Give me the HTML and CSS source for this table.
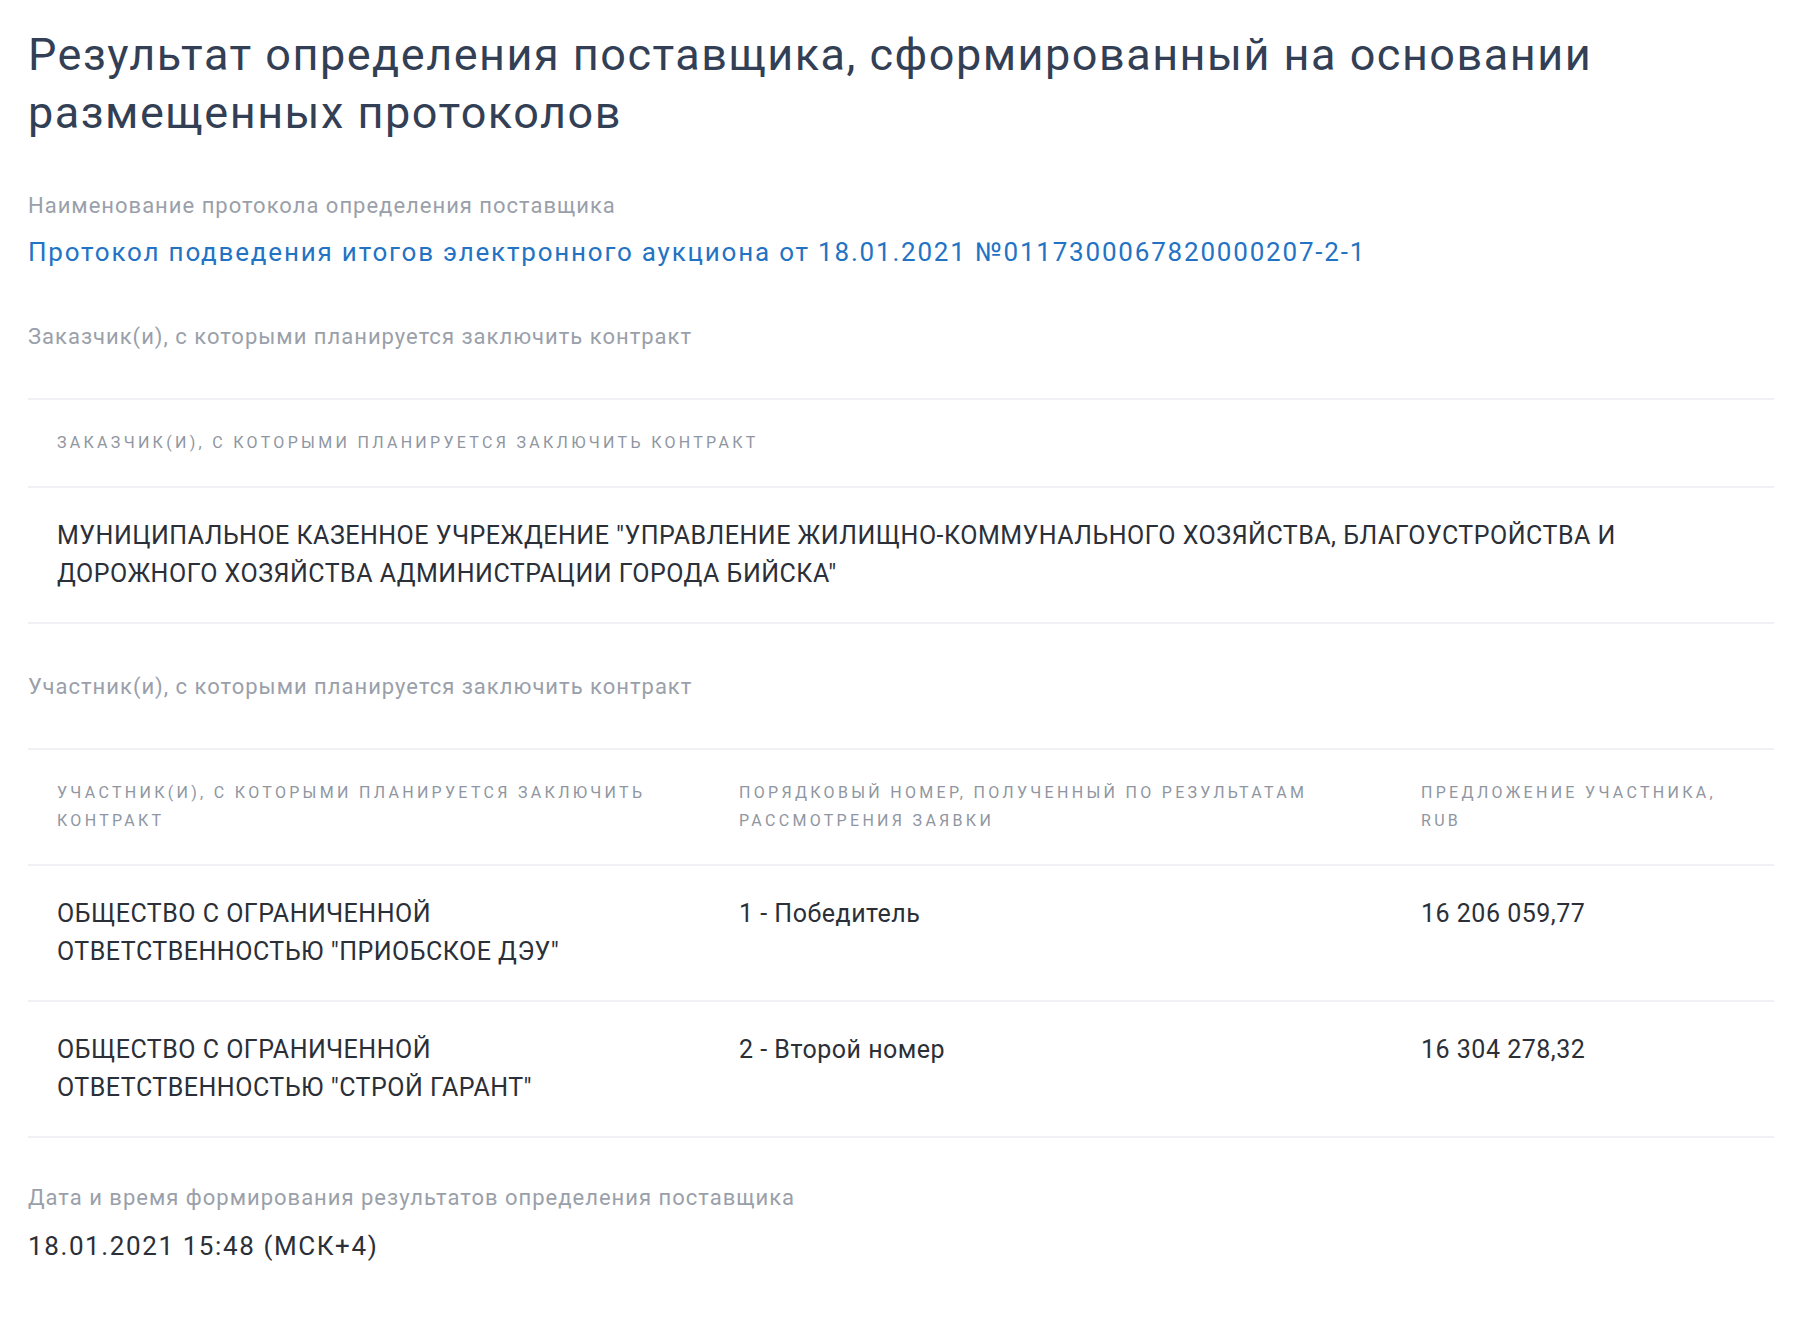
FILE: index.html
```html
<!DOCTYPE html>
<html lang="ru">
<head>
<meta charset="utf-8">
<title>Результат определения поставщика</title>
<link rel="stylesheet" href="styles.css">
</head>
<body>
<main class="page">
  <h1 class="title">Результат определения поставщика, сформированный на основании размещенных протоколов</h1>

  <section class="field field-link">
    <div class="label">Наименование протокола определения поставщика</div>
    <a class="link" href="#">Протокол подведения итогов электронного аукциона от 18.01.2021 №0117300067820000207-2-1</a>
  </section>

  <section class="field">
    <div class="label label-table">Заказчик(и), с которыми планируется заключить контракт</div>
    <div class="table table-one">
      <div class="th">Заказчик(и), с которыми планируется заключить контракт</div>
      <div class="td">МУНИЦИПАЛЬНОЕ КАЗЕННОЕ УЧРЕЖДЕНИЕ "УПРАВЛЕНИЕ ЖИЛИЩНО-КОММУНАЛЬНОГО ХОЗЯЙСТВА, БЛАГОУСТРОЙСТВА И ДОРОЖНОГО ХОЗЯЙСТВА АДМИНИСТРАЦИИ ГОРОДА БИЙСКА"</div>
    </div>
  </section>

  <section class="field field-last-table">
    <div class="label label-table">Участник(и), с которыми планируется заключить контракт</div>
    <div class="table table-three">
      <div class="th">Участник(и), с которыми планируется заключить контракт</div>
      <div class="th">Порядковый номер, полученный по результатам рассмотрения заявки</div>
      <div class="th">Предложение участника, RUB</div>

      <div class="td">ОБЩЕСТВО С ОГРАНИЧЕННОЙ ОТВЕТСТВЕННОСТЬЮ "ПРИОБСКОЕ ДЭУ"</div>
      <div class="td">1 - Победитель</div>
      <div class="td">16 206 059,77</div>

      <div class="td">ОБЩЕСТВО С ОГРАНИЧЕННОЙ ОТВЕТСТВЕННОСТЬЮ "СТРОЙ ГАРАНТ"</div>
      <div class="td">2 - Второй номер</div>
      <div class="td">16 304 278,32</div>
    </div>
  </section>

  <section class="field">
    <div class="label">Дата и время формирования результатов определения поставщика</div>
    <div class="value">18.01.2021 15:48 (МСК+4)</div>
  </section>
</main>
</body>
</html>
```

FILE: styles.css
```css
* { box-sizing: border-box; }

html, body {
  margin: 0;
  padding: 0;
  background: #ffffff;
}

body {
  font-family: Roboto, "Liberation Sans", sans-serif;
  color: #2b2f38;
}

.page {
  padding: 26px 26px 40px 28px;
  display: flex;
  flex-direction: column;
}

.title {
  margin: 0 0 49px 0;
  font-size: 45px;
  line-height: 58px;
  font-weight: 400;
  letter-spacing: 1.5px;
  color: #333f55;
}

.field {
  display: flex;
  flex-direction: column;
  margin-bottom: 48px;
}

.field-link {
  margin-bottom: 53px;
}

.field-last-table {
  margin-bottom: 45px;
}

.label {
  font-size: 22px;
  line-height: 30px;
  letter-spacing: 1px;
  color: #9aa0aa;
}

.label-table {
  margin-bottom: 46px;
}

.link {
  margin-top: 14px;
  font-size: 26px;
  line-height: 34px;
  letter-spacing: 1.8px;
  color: #2373c4;
  text-decoration: none;
}

.value {
  margin-top: 16px;
  font-size: 26px;
  line-height: 34px;
  letter-spacing: 1.6px;
  color: #2b2f38;
}

.table {
  display: grid;
  border-top: 2px solid #f0f1f4;
}

.table-one {
  grid-template-columns: 1fr;
}

.table-three {
  grid-template-columns: 682px 682px 1fr;
}

.th {
  padding: 29px;
  font-size: 16px;
  line-height: 28px;
  letter-spacing: 3.3px;
  text-transform: uppercase;
  color: #8f96a1;
  border-bottom: 2px solid #f0f1f4;
}

.td {
  padding: 29px;
  font-size: 25px;
  line-height: 38px;
  letter-spacing: 0.5px;
  color: #2b2f38;
  border-bottom: 2px solid #f0f1f4;
}
```
